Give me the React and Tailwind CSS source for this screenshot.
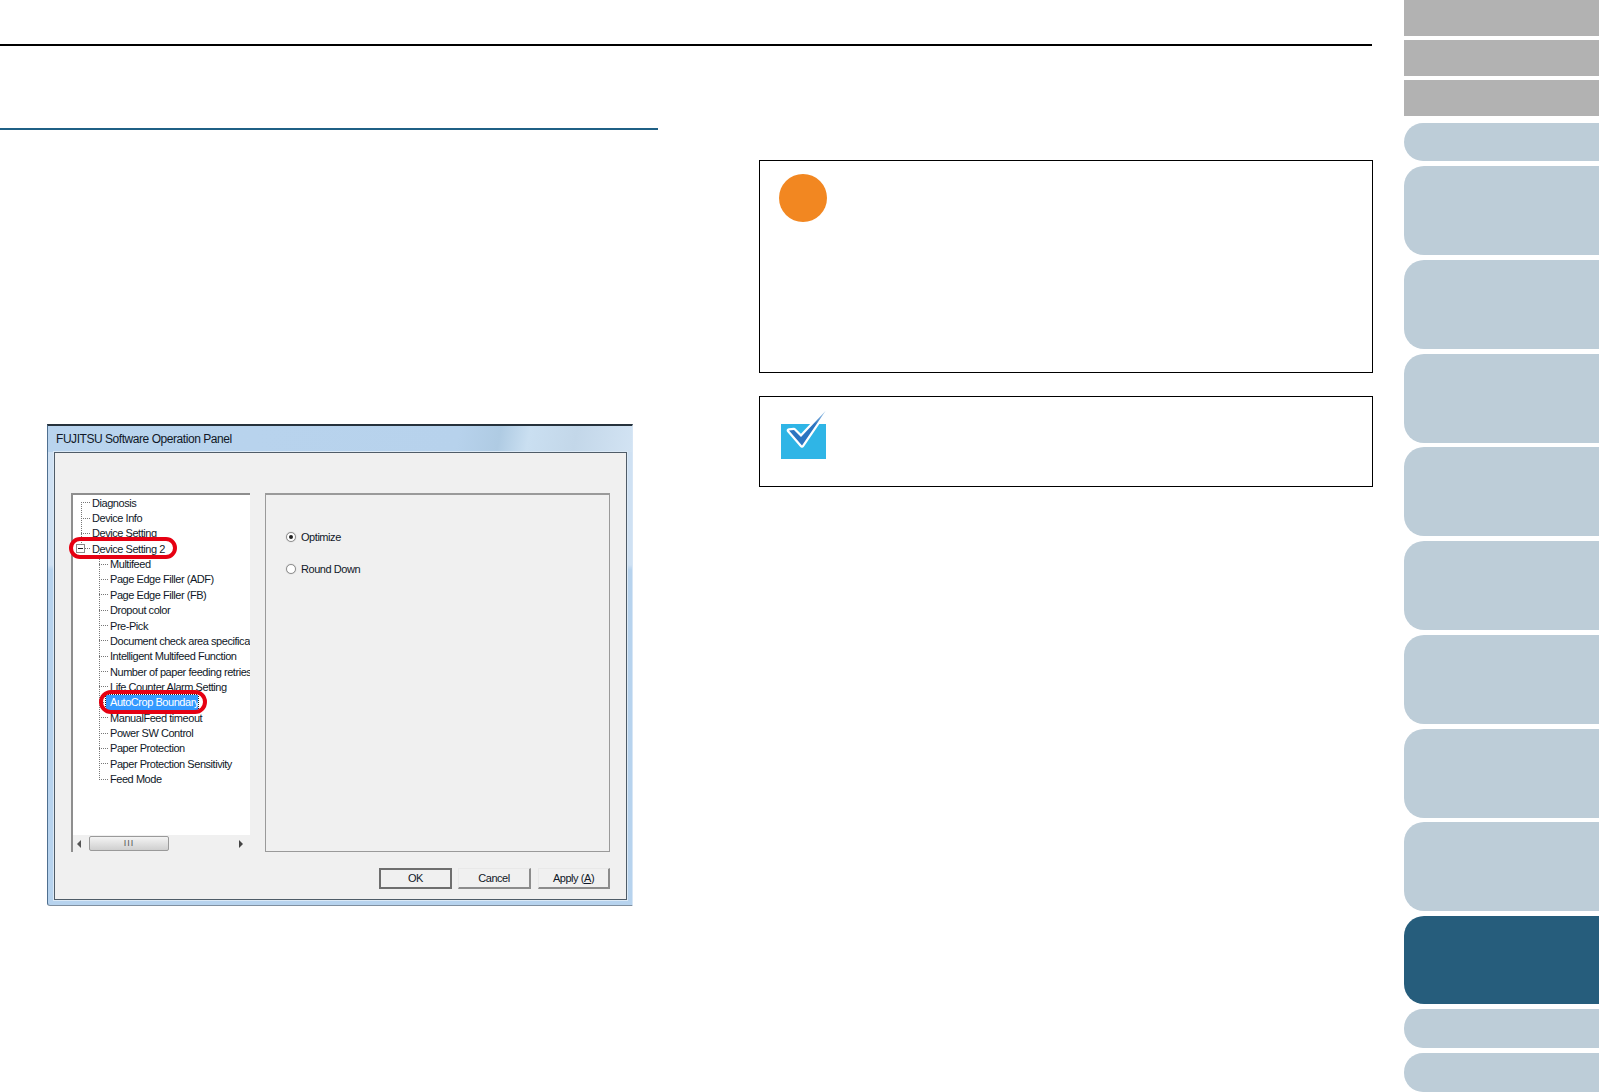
const treeTop = ["Diagnosis", "Device Info", "Device Setting"];
const treeKids = [
  "Multifeed",
  "Page Edge Filler (ADF)",
  "Page Edge Filler (FB)",
  "Dropout color",
  "Pre-Pick",
  "Document check area specification",
  "Intelligent Multifeed Function",
  "Number of paper feeding retries",
  "Life Counter Alarm Setting",
  "AutoCrop Boundary",
  "ManualFeed timeout",
  "Power SW Control",
  "Paper Protection",
  "Paper Protection Sensitivity",
  "Feed Mode",
];

function Row({ label, indent, selected, expander }) {
  return (
    <div className={`flex h-[15.37px] shrink-0 items-center whitespace-nowrap ${indent ? "pl-[26px]" : "pl-[8px]"}`}>
      {expander ? (
        <>
          <span className="-ml-[5px] flex h-[9px] w-[9px] shrink-0 items-center justify-center border border-[#8a8a8a] bg-white">
            <span className="h-px w-[5px] bg-[#222]" />
          </span>
          <span className="w-[5px] shrink-0 border-t border-dotted border-[#777]" />
        </>
      ) : (
        <span className={`w-[9px] shrink-0 border-t border-dotted border-[#777] ${selected ? "mr-[-2px]" : ""}`} />
      )}
      <span
        className={`leading-[14px] ${
          selected
            ? "flex h-[15px] w-[92px] items-center overflow-hidden bg-[#3399ff] pl-[4px] text-white outline-1 outline-dotted outline-[#222]"
            : "ml-[2px] text-[#101828]"
        }`}
      >
        {label}
      </span>
    </div>
  );
}

function Tree() {
  return (
    <div className="relative flex h-[359px] w-[179px] flex-col border-t-2 border-l-2 border-t-[#8e8e8e] border-l-[#8e8e8e] bg-white">
      <div className="relative flex flex-1 flex-col overflow-hidden font-['Liberation_Sans',sans-serif] text-[11px] tracking-[-0.45px]">
        <span className="absolute top-[7px] left-[8px] h-[43px] border-l border-dotted border-[#777]" />
        <span className="absolute top-[58px] left-[26px] h-[227px] border-l border-dotted border-[#777]" />
        {treeTop.map((t) => (
          <Row key={t} label={t} />
        ))}
        <Row label="Device Setting 2" expander />
        {treeKids.map((t) => (
          <Row key={t} label={t} indent selected={t === "AutoCrop Boundary"} />
        ))}
      </div>
      <div className="flex h-[17px] shrink-0 items-center bg-[#f0f0f0]">
        <span className="ml-[4px] h-0 w-0 border-y-[4px] border-r-[4px] border-y-transparent border-r-[#555]" />
        <div className="ml-[8px] flex h-[15px] w-[80px] items-center justify-center rounded-[2px] border border-[#9a9a9a] bg-gradient-to-b from-[#f4f4f4] to-[#cfcfcf] font-['Liberation_Sans',sans-serif] text-[9px] leading-none tracking-[1px] text-[#555]">
          III
        </div>
        <span className="mr-[7px] ml-auto h-0 w-0 border-y-[4px] border-l-[4px] border-y-transparent border-l-[#444]" />
      </div>
      <span className="absolute top-[42px] -left-[4px] h-[22px] w-[108px] rounded-full border-4 border-[#e60012]" />
      <span className="absolute top-[195px] left-[26px] h-[24px] w-[108px] rounded-full border-4 border-[#e60012]" />
    </div>
  );
}

function Radio({ label, checked }) {
  return (
    <div className="flex h-[14px] items-center gap-[5px]">
      <span className="flex h-[10px] w-[10px] items-center justify-center rounded-full border border-[#8f8f8f] bg-white shadow-[0_0_1px_#aaa]">
        {checked && <span className="h-[4px] w-[4px] rounded-full bg-[#222]" />}
      </span>
      <span className="text-[#101828]">{label}</span>
    </div>
  );
}

function Button({ children, primary, narrow }) {
  return (
    <div
      className={`flex h-[21px] items-center justify-center bg-[#f0f0f0] text-[#101828] ${
        narrow ? "ml-[1px] w-[72px]" : "w-[73px]"
      } ${
        primary
          ? "border-2 border-[#6e6e6e]"
          : "border-t border-r-2 border-b-2 border-l border-t-[#e8e8e8] border-r-[#8c8c8c] border-b-[#8c8c8c] border-l-[#e8e8e8]"
      }`}
    >
      {children}
    </div>
  );
}

function Dialog() {
  return (
    <div className="ml-[47px] flex h-[482px] w-[586px] flex-col rounded-bl-[3px] border-t-2 border-r border-b border-l border-t-[#26323c] border-r-[#d7e6f5] border-b-[#7f8f9f] border-l-[#4f6f8f] bg-gradient-to-b from-[#cfe1f3] from-29% to-[#b7d3ee] to-30% pr-[5px] pb-[5px] pl-[6px]">
      <div className="-mr-[5px] -ml-[6px] flex h-[26px] shrink-0 items-center bg-[linear-gradient(100deg,#b9d4ee_0%,#b7d2ec_70%,#afcbe3_77%,#cadff1_82%,#c3d7e9_90%,#d2e3f3_100%)] pl-[8px] font-['Liberation_Sans',sans-serif] text-[12px] tracking-[-0.45px] text-[#101828]">
        FUJITSU Software Operation Panel
      </div>
      <div className="flex flex-1 flex-col border border-[#4f5c68] bg-[#f0f0f0] pt-[40px] pr-[16px] pl-[16px] font-['Liberation_Sans',sans-serif] text-[11px] tracking-[-0.45px] shadow-[0_0_0_1px_#dbe9f6]">
        <div className="flex gap-[15px]">
          <Tree />
          <div className="flex h-[359px] w-[346px] flex-col gap-[18px] border border-t-2 border-[#9a9a9a] pt-[35px] pl-[20px]">
            <Radio label="Optimize" checked />
            <Radio label="Round Down" />
          </div>
        </div>
        <div className="mt-[16px] flex justify-end gap-[6px]">
          <Button primary>OK</Button>
          <Button>Cancel</Button>
          <Button narrow>
            <span>
              Apply (<span className="underline">A</span>)
            </span>
          </Button>
        </div>
      </div>
    </div>
  );
}

const tabs = Array.from({ length: 8 }, (_, i) => i);

export default function App() {
  return (
    <div className="flex h-[1092px] w-[1599px] overflow-hidden bg-white">
      <main className="w-[1373px] shrink-0 pt-[44px]">
        <div className="mr-[1px] h-[2px] bg-black" />
        <div className="flex">
          <section className="w-[658px] shrink-0">
            <div className="mt-[82px] h-[2px] bg-[#1f6085]" />
            <div className="mt-[294px]">
              <Dialog />
            </div>
          </section>
          <section className="ml-[101px] flex-1 pt-[114px]">
            <div className="h-[213px] border border-black pt-[13px] pl-[19px]">
              <div className="h-[48px] w-[48px] rounded-full bg-[#f28721]" />
            </div>
            <div className="mt-[23px] h-[91px] border border-black pt-[13px] pl-[21px]">
              <svg width="46" height="50" viewBox="0 0 46 50" className="block">
                <defs>
                  <linearGradient id="tick" x1="0.9" y1="0" x2="0.4" y2="0.7">
                    <stop offset="0" stopColor="#9cc4e8" />
                    <stop offset="0.5" stopColor="#2c74c0" />
                  </linearGradient>
                </defs>
                <rect x="0" y="14" width="45" height="35" fill="#2fb5e6" />
                <path
                  d="M8 20.5 L13 20 L20 27 L44.7 0.7 L21 35.5 Z"
                  fill="#fff"
                  stroke="#fff"
                  strokeWidth="4.5"
                  strokeLinejoin="round"
                />
                <path d="M8 20.5 L13 20 L20 27 L44.7 0.7 L21 35.5 Z" fill="url(#tick)" />
              </svg>
            </div>
          </section>
        </div>
      </main>
      <nav className="ml-[31px] flex w-[195px] shrink-0 flex-col">
        <div className="flex flex-col gap-[4px]">
          <div className="h-[36px] bg-[#b2b2b2]" />
          <div className="h-[36px] bg-[#b2b2b2]" />
          <div className="h-[36px] bg-[#b2b2b2]" />
        </div>
        <div className="mt-[7px] h-[38px] rounded-l-[19px] bg-[#bdcdd8]" />
        <div className="mt-[5px] flex flex-col gap-[4.75px]">
          {tabs.map((i) => (
            <div key={i} className="h-[89px] rounded-l-[20px] bg-[#bdcdd8]" />
          ))}
          <div className="h-[88px] rounded-l-[20px] bg-[#265d7c]" />
        </div>
        <div className="mt-[5px] h-[39px] rounded-l-[19px] bg-[#bdcdd8]" />
        <div className="mt-[5px] h-[38.5px] rounded-l-[19px] bg-[#bdcdd8]" />
      </nav>
    </div>
  );
}
